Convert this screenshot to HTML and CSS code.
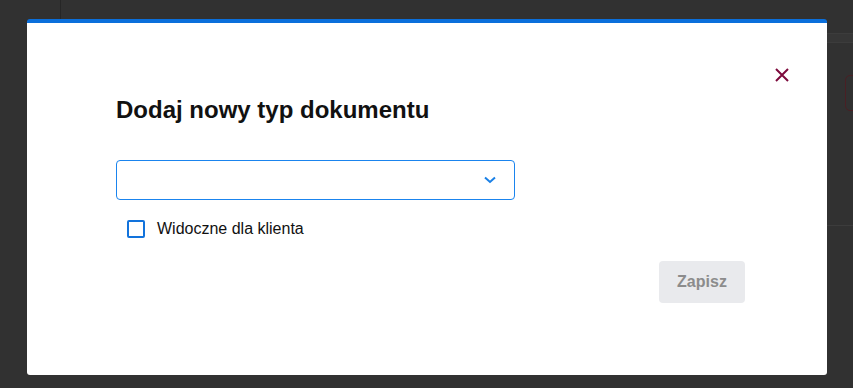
FILE: index.html
```html
<!DOCTYPE html>
<html lang="pl">
<head>
    <meta charset="UTF-8">
    <meta name="viewport" content="width=device-width, initial-scale=1.0">
    <title>Dodaj nowy typ dokumentu</title>
    <link rel="stylesheet" href="styles.css">
</head>
<body>
    <div class="backdrop">
        <div class="bg-line-v"></div>
        <div class="bg-band"></div>
        <div class="bg-btn"></div>
        <div class="bg-line-h"></div>
    </div>
    <section class="modal">
        <button class="modal-close" aria-label="Zamknij">
            <svg width="16" height="16" viewBox="0 0 16 16">
                <path d="M2 2 L14 14 M14 2 L2 14" stroke="#7d0a3c" stroke-width="2" fill="none"/>
            </svg>
        </button>
        <div class="modal-body">
            <h2 class="modal-title">Dodaj nowy typ dokumentu</h2>
            <div class="select">
                <svg class="select-arrow" width="12" height="8" viewBox="0 0 12 8">
                    <path d="M1 1.5 L6 6 L11 1.5" stroke="#1a80e6" stroke-width="2" fill="none"/>
                </svg>
            </div>
            <label class="check">
                <span class="check-box"></span>
                <span>Widoczne dla klienta</span>
            </label>
            <div class="actions">
                <button class="btn-save" disabled>Zapisz</button>
            </div>
        </div>
    </section>
</body>
</html>
```

FILE: styles.css
```css
html{
    box-sizing: border-box;
    font-family: "Liberation Sans", Arial, sans-serif;
}
*,
*:before,
*:after{
    box-sizing: inherit;
}
body{
    margin: 0;
    width: 853px;
    height: 388px;
    background-color: #313131;
    overflow: hidden;
    position: relative;
}
.backdrop{
    position: absolute;
    inset: 0;
}
.bg-line-v{
    position: absolute;
    left: 60px;
    top: 0;
    width: 1px;
    height: 20px;
    background-color: #262626;
}
.bg-band{
    position: absolute;
    left: 827px;
    top: 33px;
    width: 26px;
    height: 10px;
    border-top: 1px solid #3c3c3c;
    border-bottom: 1px solid #3c3c3c;
    background-color: #363636;
}
.bg-btn{
    position: absolute;
    left: 845px;
    top: 75px;
    width: 30px;
    height: 36px;
    border: 1px solid #4a1f24;
    border-radius: 5px;
}
.bg-line-h{
    position: absolute;
    left: 827px;
    top: 225px;
    width: 26px;
    height: 1px;
    background-color: #3c3c3c;
}
.modal{
    position: absolute;
    left: 27px;
    top: 19px;
    width: 800px;
    height: 356px;
    background-color: white;
    border-top: 4px solid #0b6fdb;
    border-radius: 3px;
}
.modal-close{
    position: absolute;
    top: 44px;
    right: 37px;
    padding: 0;
    border: none;
    background: none;
    width: 16px;
    height: 16px;
}
.modal-close svg{
    display: block;
}
.modal-body{
    padding: 74px 82px 0 89px;
}
.modal-title{
    margin: 0 0 37px;
    font-size: 24px;
    font-weight: bold;
    color: #111;
    line-height: 26px;
}
.select{
    width: 399px;
    height: 40px;
    border: 1px solid #1a84ee;
    border-radius: 4px;
    display: flex;
    align-items: center;
    justify-content: flex-end;
    padding-right: 18px;
}
.check{
    display: flex;
    align-items: center;
    gap: 12px;
    margin: 20px 0 0 11px;
    font-size: 16px;
    color: #111;
}
.check-box{
    width: 18px;
    height: 18px;
    border: 2px solid #1273dc;
    border-radius: 2px;
}
.actions{
    display: flex;
    justify-content: flex-end;
    margin-top: 23px;
}
.btn-save{
    width: 86px;
    height: 42px;
    border: none;
    border-radius: 4px;
    background-color: #e9eaed;
    color: #8c8c8c;
    font-family: inherit;
    font-size: 16px;
    font-weight: bold;
}
```
